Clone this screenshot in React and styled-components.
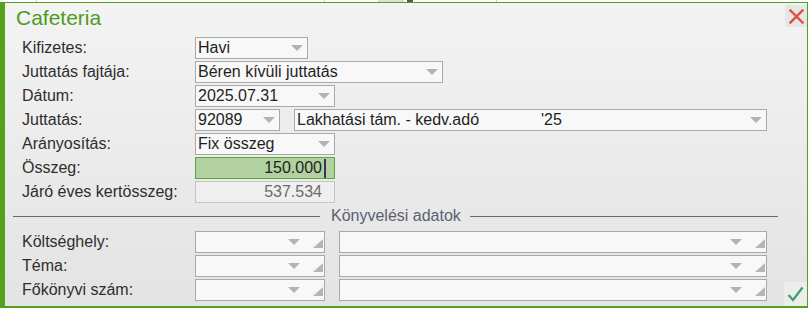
import React from "react";
import styled, { createGlobalStyle } from "styled-components";

const Global = createGlobalStyle`
  html, body { margin: 0; padding: 0; background: #ffffff; }
  body { font-family: "Liberation Sans", Arial, sans-serif; }
  #root { width: 810px; height: 309px; overflow: hidden; }
`;

const TopStrip = styled.div`
  display: flex;
  height: 2px;
  width: 810px;
`;

const StripMark = styled.span`
  display: block;
  height: 2px;
  margin-left: ${(p) => p.$gap}px;
  width: ${(p) => p.$w}px;
  background: ${(p) => p.$c};
`;

const Dialog = styled.div`
  box-sizing: border-box;
  width: 808px;
  height: 306px;
  border-style: solid;
  border-color: #55a11f;
  border-width: 1px 1px 2px 5px;
  background: linear-gradient(#f3f3f3, #e3e3e3);
  display: flex;
  flex-direction: column;
`;

const Header = styled.div`
  display: flex;
  justify-content: space-between;
  align-items: flex-start;
  height: 36px;
`;

const Title = styled.div`
  margin: 3px 0 0 11px;
  font-size: 21px;
  line-height: 24px;
  color: #4c9b1f;
`;

const IconButton = styled.div`
  box-sizing: border-box;
  width: ${(p) => p.$w}px;
  height: ${(p) => p.$h}px;
  margin-top: ${(p) => p.$top}px;
  background: ${(p) => p.$bg};
  display: flex;
  align-items: center;
  justify-content: center;
  flex-shrink: 0;
`;

const Form = styled.div`
  display: flex;
  flex-direction: column;
  gap: 2px;
  padding-left: 17px;
`;

const Row = styled.div`
  display: flex;
  align-items: flex-start;
  min-height: 22px;
`;

const Label = styled.div`
  width: 173px;
  flex-shrink: 0;
  font-size: 16px;
  line-height: 22px;
  color: #2e2e2e;
  white-space: nowrap;
`;

const Box = styled.div`
  box-sizing: border-box;
  width: ${(p) => p.$w}px;
  height: 22px;
  margin-left: ${(p) => p.$ml || 0}px;
  border: 1px solid ${(p) => (p.$tone === "green" ? "#5ea43a" : p.$tone === "ro" ? "#c4c4c4" : "#a9a9a9")};
  background: ${(p) => (p.$tone === "green" ? "#b1d1a1" : p.$tone === "ro" ? "#efefef" : "#f8f8f8")};
  display: flex;
  align-items: center;
  justify-content: ${(p) => (p.$right ? "flex-end" : "flex-start")};
  padding: 0 ${(p) => p.$pr ?? 4}px 0 2px;
  font-size: 16px;
  line-height: 20px;
  color: ${(p) => (p.$tone === "ro" ? "#6a6a6a" : "#1f1f1f")};
  flex-shrink: 0;
  white-space: nowrap;
  overflow: hidden;
`;

const BoxText = styled.span`
  flex: 1;
  display: flex;
`;

const Col = styled.span`
  width: ${(p) => p.$w}px;
  flex-shrink: 0;
`;

const Cursor = styled.span`
  display: block;
  width: 2px;
  height: 19px;
  margin-left: 2px;
  background: #3f3352;
`;

const Arrow = styled.svg`
  flex-shrink: 0;
  display: block;
`;

const Corner = styled.svg`
  flex-shrink: 0;
  display: block;
  margin: 2px 0 0 13px;
  align-self: center;
`;

const SepRow = styled.div`
  display: flex;
  align-items: center;
  height: 22px;
  margin: 0 29px 2px -9px;
`;

const SepLine = styled.div`
  height: 1px;
  background: #6b6b6b;
  width: ${(p) => (p.$w ? `${p.$w}px` : "auto")};
  flex: ${(p) => (p.$w ? "none" : "1")};
  margin-top: 1px;
`;

const SepText = styled.div`
  font-size: 16px;
  line-height: 22px;
  color: #5a6172;
  margin: 0 9px 0 11px;
  white-space: nowrap;
`;

const Spacer = styled.div`
  flex: 1;
`;

const DownArrow = () => (
  <Arrow width="12" height="6" viewBox="0 0 12 6">
    <polygon points="0,0 12,0 6,6" fill="#b3b3b3" />
  </Arrow>
);

const CornerMark = () => (
  <Corner width="10" height="9" viewBox="0 0 10 9">
    <polygon points="10,0 10,9 0,9" fill="#b5b5b5" />
  </Corner>
);

const Select = ({ w, ml, children }) => (
  <Box $w={w} $ml={ml}>
    <BoxText>{children}</BoxText>
    <DownArrow />
  </Box>
);

const Lookup = ({ w, ml }) => (
  <Box $w={w} $ml={ml} $pr={1}>
    <BoxText />
    <DownArrow />
    <CornerMark />
  </Box>
);

export default function App() {
  return (
    <>
      <Global />
      <TopStrip>
        <StripMark $gap={36} $w={1} $c="#cfcfcf" />
        <StripMark $gap={287} $w={1} $c="#cfcfcf" />
        <StripMark $gap={53} $w={26} $c="#dedede" />
        <StripMark $gap={3} $w={6} $c="#555555" />
        <StripMark $gap={83} $w={1} $c="#cfcfcf" />
      </TopStrip>
      <Dialog>
        <Header>
          <Title>Cafeteria</Title>
          <IconButton $w={22} $h={22} $top={2} $bg="#e6e6e6">
            <svg width="15" height="15" viewBox="0 0 15 15">
              <path d="M1.5 1.5 L13.5 13.5 M13.5 1.5 L1.5 13.5" stroke="#d9533b" strokeWidth="2.4" strokeLinecap="square" />
            </svg>
          </IconButton>
        </Header>
        <Form>
          <Row>
            <Label>Kifizetes:</Label>
            <Select w={113}>Havi</Select>
          </Row>
          <Row>
            <Label>Juttatás fajtája:</Label>
            <Select w={248}>Béren kívüli juttatás</Select>
          </Row>
          <Row>
            <Label>Dátum:</Label>
            <Select w={140}>2025.07.31</Select>
          </Row>
          <Row>
            <Label>Juttatás:</Label>
            <Select w={85}>92089</Select>
            <Select w={473} ml={14}>
              <Col $w={244}>Lakhatási tám. - kedv.adó</Col>
              <span>'25</span>
            </Select>
          </Row>
          <Row>
            <Label>Arányosítás:</Label>
            <Select w={140}>Fix összeg</Select>
          </Row>
          <Row>
            <Label>Összeg:</Label>
            <Box $w={140} $tone="green" $right $pr={8}>
              150.000
              <Cursor />
            </Box>
          </Row>
          <Row>
            <Label>Járó éves kertösszeg:</Label>
            <Box $w={140} $tone="ro" $right $pr={12}>
              537.534
            </Box>
          </Row>
          <SepRow>
            <SepLine $w={307} />
            <SepText>Könyvelési adatok</SepText>
            <SepLine />
          </SepRow>
          <Row>
            <Label>Költséghely:</Label>
            <Lookup w={130} />
            <Lookup w={428} ml={14} />
          </Row>
          <Row>
            <Label>Téma:</Label>
            <Lookup w={130} />
            <Lookup w={428} ml={14} />
          </Row>
          <Row>
            <Label>Főkönyvi szám:</Label>
            <Lookup w={130} />
            <Lookup w={428} ml={14} />
            <Spacer />
            <IconButton $w={23} $h={24} $top={3} $bg="#ececec">
              <svg width="17" height="16" viewBox="0 0 17 16">
                <path d="M1.5 9 L6 14 L15.5 1.5" stroke="#3f9f6b" strokeWidth="2.2" fill="none" />
              </svg>
            </IconButton>
          </Row>
        </Form>
      </Dialog>
    </>
  );
}
